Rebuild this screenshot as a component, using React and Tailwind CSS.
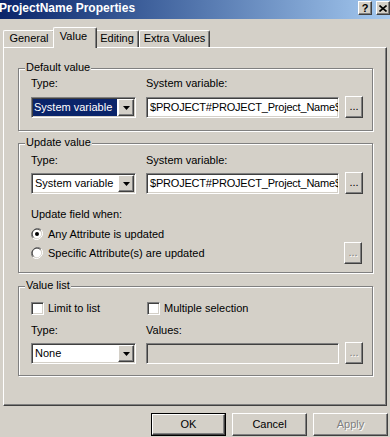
import React from "react";

const raised =
  "border border-t-white border-l-white border-r-[#404040] border-b-[#404040] shadow-[inset_-1px_-1px_0_#808080]";
const sunken =
  "border border-t-[#808080] border-l-[#808080] border-r-white border-b-white shadow-[inset_1px_1px_0_#404040,inset_-1px_-1px_0_#d4d0c8]";

const Arrow = () => (
  <svg width="7" height="4" viewBox="0 0 7 4">
    <path d="M0 0h7L3.5 4z" fill="#000" />
  </svg>
);

const Combo = ({ value, selected }) => (
  <div className={`flex h-[21px] w-[105px] bg-white p-[1px] ${sunken}`}>
    <div className="flex flex-1 items-center pr-[1px]">
      {selected ? (
        <span className="flex h-full w-full items-center bg-[#0a246a] pl-[1px] text-white">
          {value}
        </span>
      ) : (
        <span className="pl-[2px]">{value}</span>
      )}
    </div>
    <div
      className={`flex h-[17px] w-[16px] items-center justify-center bg-[#d4d0c8] ${raised}`}
    >
      <Arrow />
    </div>
  </div>
);

const TextBox = ({ value, disabled }) => (
  <div
    className={`flex h-[21px] w-[193px] items-center overflow-hidden whitespace-nowrap pl-[3px] tracking-[-0.2px] ${sunken} ${
      disabled ? "bg-[#d4d0c8]" : "bg-white"
    }`}
  >
    {value}
  </div>
);

const DotsButton = ({ disabled }) => (
  <div
    className={`flex h-[22px] w-[18px] items-end justify-center pb-[5px] leading-none bg-[#d4d0c8] ${raised} ${
      disabled ? "text-[#808080] [text-shadow:1px_1px_0_#fff]" : ""
    }`}
  >
    ...
  </div>
);

const Radio = ({ checked }) => (
  <svg width="12" height="12" viewBox="0 0 12 12">
    <path d="M10.2 1.8A6 6 0 0 0 1.8 10.2" stroke="#808080" fill="none" />
    <path d="M9.4 2.6A4.8 4.8 0 0 0 2.6 9.4" stroke="#404040" fill="none" />
    <path d="M1.8 10.2A6 6 0 0 0 10.2 1.8" stroke="#fff" fill="none" />
    <circle cx="6" cy="6" r="4.2" fill="#fff" />
    {checked && <circle cx="6" cy="6" r="2" fill="#000" />}
  </svg>
);

const Checkbox = () => <div className={`h-[13px] w-[13px] bg-white ${sunken}`} />;

const Group = ({ title, className, children }) => (
  <div
    className={`relative ml-[14px] w-[355px] border border-[#808080] shadow-[inset_1px_1px_0_#fff,1px_1px_0_#fff] ${className}`}
  >
    <span className="absolute left-[6px] top-[-8px] bg-[#d4d0c8] px-[1px] leading-[13px]">
      {title}
    </span>
    {children}
  </div>
);

const VarRow = ({ selected }) => (
  <div className="flex items-end">
    <Combo value="System variable" selected={selected} />
    <div className="ml-[10px]">
      <TextBox value="$PROJECT#PROJECT_Project_Name$" />
    </div>
    <div className="ml-[6px]">
      <DotsButton />
    </div>
  </div>
);

const Labels = ({ left, right }) => (
  <div className="flex leading-[13px]">
    <span className="w-[115px]">{left}</span>
    <span>{right}</span>
  </div>
);

const tabs = [
  { name: "General", w: "w-[52px]" },
  { name: "Value", w: "w-[44px]", active: true },
  { name: "Editing", w: "w-[44px]" },
  { name: "Extra Values", w: "w-[71px]" },
];

const App = () => {
  return (
    <div className="h-[437px] w-[390px] overflow-hidden bg-[#d4d0c8] text-[11px] text-black font-['Liberation_Sans',Arial,sans-serif]">
      {/* title bar */}
      <div className="flex h-[19px] items-start bg-gradient-to-r from-[#0a246a] to-[#a6caf0]">
        <span className="ml-[-1px] mt-[1px] text-[12px] font-bold leading-[14px] text-white">
          ProjectName Properties
        </span>
        <div className="ml-auto mt-[1px] flex gap-[4px]">
          <div
            className={`flex h-[14px] w-[14px] items-center justify-center bg-[#d4d0c8] text-[11px] font-bold leading-none ${raised}`}
          >
            ?
          </div>
          <div
            className={`flex h-[14px] w-[14px] items-center justify-center bg-[#d4d0c8] ${raised}`}
          >
            <svg width="8" height="7" viewBox="0 0 8 7">
              <path d="M0.5 0.5l7 6M7.5 0.5l-7 6" stroke="#000" strokeWidth="1.6" />
            </svg>
          </div>
        </div>
      </div>

      {/* tabs */}
      <div className="ml-[3px] mt-[8px] flex h-[20px] items-end">
        {tabs.map((t) =>
          t.active ? (
            <div
              key={t.name}
              className={`relative z-10 mx-[-2px] mb-[-1px] flex h-[21px] ${t.w} justify-center rounded-t-[2px] border-l border-t border-r border-l-white border-t-white border-r-[#404040] bg-[#d4d0c8] pt-[2px] pr-[3px] leading-[13px] shadow-[inset_-1px_0_0_#808080]`}
            >
              {t.name}
            </div>
          ) : (
            <div
              key={t.name}
              className={`flex h-[17px] ${t.w} justify-center rounded-t-[2px] border-l border-t border-r border-l-white border-t-white border-r-[#404040] pt-[1px] leading-[13px] shadow-[inset_-1px_0_0_#808080]`}
            >
              {t.name}
            </div>
          )
        )}
      </div>

      {/* panel */}
      <div className="mx-[3px] flex h-[359px] flex-col border border-t-white border-l-white border-r-[#404040] border-b-[#404040] shadow-[inset_-1px_-1px_0_#808080]">
        <Group title="Default value" className="mt-[20px] h-[63px] pl-[12px] pt-[8px]">
          <Labels left="Type:" right="System variable:" />
          <div className="mt-[6px]">
            <VarRow selected />
          </div>
        </Group>

        <Group title="Update value" className="mt-[12px] h-[130px] pl-[12px] pt-[10px]">
          <Labels left="Type:" right="System variable:" />
          <div className="mt-[5px]">
            <VarRow />
          </div>
          <div className="mt-[14px] leading-[13px]">Update field when:</div>
          <div className="mt-[4px] flex h-[18px] items-center gap-[5px]">
            <Radio checked />
            <span>Any Attribute is updated</span>
          </div>
          <div className="mt-[-1px] flex h-[22px] w-[331px] items-center">
            <Radio />
            <span className="ml-[5px]">Specific Attribute(s) are updated</span>
            <div className="ml-auto">
              <DotsButton disabled />
            </div>
          </div>
        </Group>

        <Group title="Value list" className="mt-[13px] h-[90px] pl-[12px] pt-[15px]">
          <div className="flex h-[13px] items-center">
            <div className="flex w-[116px] items-center gap-[4px]">
              <Checkbox />
              <span>Limit to list</span>
            </div>
            <div className="flex items-center gap-[4px]">
              <Checkbox />
              <span>Multiple selection</span>
            </div>
          </div>
          <div className="mt-[9px]">
            <Labels left="Type:" right="Values:" />
          </div>
          <div className="mt-[5px] flex items-end">
            <Combo value="None" />
            <div className="ml-[10px]">
              <TextBox value="" disabled />
            </div>
            <div className="ml-[6px]">
              <DotsButton disabled />
            </div>
          </div>
        </Group>
      </div>

      {/* dialog buttons */}
      <div className="mt-[7px] flex justify-end gap-[6px] pr-[2px]">
        <div className="h-[23px] w-[75px] border border-black">
          <div className={`flex h-full w-full items-center justify-center ${raised}`}>OK</div>
        </div>
        <div className={`flex h-[23px] w-[75px] items-center justify-center ${raised}`}>
          Cancel
        </div>
        <div
          className={`flex h-[23px] w-[75px] items-center justify-center text-[#808080] [text-shadow:1px_1px_0_#fff] ${raised}`}
        >
          Apply
        </div>
      </div>
    </div>
  );
};

export default App;
